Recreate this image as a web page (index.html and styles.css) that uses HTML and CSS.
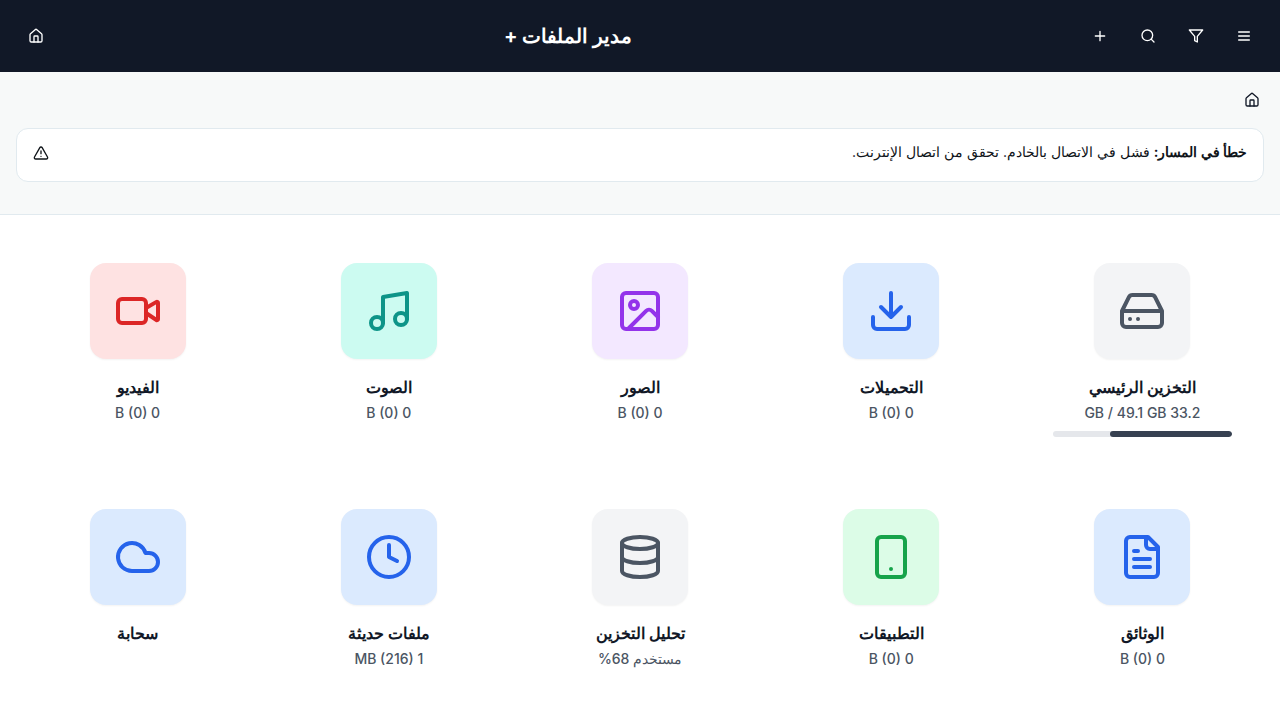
FILE: index.html
```html
<!DOCTYPE html>
<html lang="ar" dir="rtl">
<head>
<meta charset="utf-8">
<title>مدير الملفات +</title>
<meta name="viewport" content="width=device-width, initial-scale=1">
<link rel="stylesheet" href="styles.css">
</head>
<body>
<header class="topbar">
  <div class="actions">
    <button class="icon-btn" aria-label="القائمة"><svg class="icon" viewBox="0 0 24 24"><path d="M4 12h16M4 6h16M4 18h16"/></svg></button>
    <button class="icon-btn" aria-label="تصفية"><svg class="icon" viewBox="0 0 24 24"><path d="M22 3H2l8 9.46V19l4 2v-8.54z"/></svg></button>
    <button class="icon-btn" aria-label="بحث"><svg class="icon" viewBox="0 0 24 24"><circle cx="11" cy="11" r="8"/><path d="m21 21-4.3-4.3"/></svg></button>
    <button class="icon-btn" aria-label="إضافة"><svg class="icon" viewBox="0 0 24 24"><path d="M5 12h14M12 5v14"/></svg></button>
  </div>
  <h1 class="title">مدير الملفات +</h1>
  <button class="icon-btn" aria-label="الرئيسية"><svg class="icon" viewBox="0 0 24 24"><path d="M15 21v-8a1 1 0 0 0-1-1h-4a1 1 0 0 0-1 1v8"/><path d="M3 10a2 2 0 0 1 .709-1.528l7-5.999a2 2 0 0 1 2.582 0l7 5.999A2 2 0 0 1 21 10v9a2 2 0 0 1-2 2H5a2 2 0 0 1-2-2z"/></svg></button>
</header>
<section class="path">
  <nav class="crumbs"><button class="crumb" aria-label="المجلد الرئيسي"><svg class="icon" viewBox="0 0 24 24"><path d="M15 21v-8a1 1 0 0 0-1-1h-4a1 1 0 0 0-1 1v8"/><path d="M3 10a2 2 0 0 1 .709-1.528l7-5.999a2 2 0 0 1 2.582 0l7 5.999A2 2 0 0 1 21 10v9a2 2 0 0 1-2 2H5a2 2 0 0 1-2-2z"/></svg></button></nav>
  <div class="alert" role="alert">
    <p class="alert-text"><strong>خطأ في المسار:</strong> فشل في الاتصال بالخادم. تحقق من اتصال الإنترنت.</p>
    <svg class="icon" viewBox="0 0 24 24"><path d="m21.73 18-8-14a2 2 0 0 0-3.48 0l-8 14A2 2 0 0 0 4 21h16a2 2 0 0 0 1.73-3"/><path d="M12 9v4M12 17h.01"/></svg>
  </div>
</section>
<main class="grid">
  <article class="card">
    <div class="tile gray"><svg class="glyph" viewBox="0 0 24 24"><path d="M22 12H2M5.45 5.11 2 12v6a2 2 0 0 0 2 2h16a2 2 0 0 0 2-2v-6l-3.45-6.89A2 2 0 0 0 16.76 4H7.24a2 2 0 0 0-1.79 1.11zM6 16h.01M10 16h.01"/></svg></div>
    <h2 class="name">التخزين الرئيسي</h2>
    <p class="meta">33.2 GB / 49.1 GB</p>
    <div class="bar"><div class="fill" style="width:68%"></div></div>
  </article>
  <article class="card">
    <div class="tile blue"><svg class="glyph" viewBox="0 0 24 24"><path d="M21 15v4a2 2 0 0 1-2 2H5a2 2 0 0 1-2-2v-4M7 10l5 5 5-5M12 15V3"/></svg></div>
    <h2 class="name">التحميلات</h2>
    <p class="meta">0 B (0)</p>
  </article>
  <article class="card">
    <div class="tile purple"><svg class="glyph" viewBox="0 0 24 24"><rect width="18" height="18" x="3" y="3" rx="2"/><circle cx="9" cy="9" r="2"/><path d="m21 15-3.086-3.086a2 2 0 0 0-2.828 0L6 21"/></svg></div>
    <h2 class="name">الصور</h2>
    <p class="meta">0 B (0)</p>
  </article>
  <article class="card">
    <div class="tile teal"><svg class="glyph" viewBox="0 0 24 24"><path d="M9 18V5l12-2v13"/><circle cx="6" cy="18" r="3"/><circle cx="18" cy="16" r="3"/></svg></div>
    <h2 class="name">الصوت</h2>
    <p class="meta">0 B (0)</p>
  </article>
  <article class="card">
    <div class="tile red"><svg class="glyph" viewBox="0 0 24 24"><path d="m16 13 5.223 3.482a.5.5 0 0 0 .777-.416V7.87a.5.5 0 0 0-.752-.432L16 10.5"/><rect x="2" y="6" width="14" height="12" rx="2"/></svg></div>
    <h2 class="name">الفيديو</h2>
    <p class="meta">0 B (0)</p>
  </article>
  <article class="card">
    <div class="tile blue"><svg class="glyph" viewBox="0 0 24 24"><path d="M15 2H6a2 2 0 0 0-2 2v16a2 2 0 0 0 2 2h12a2 2 0 0 0 2-2V7z"/><path d="M14 2v4a2 2 0 0 0 2 2h4M10 9H8M16 13H8M16 17H8"/></svg></div>
    <h2 class="name">الوثائق</h2>
    <p class="meta">0 B (0)</p>
  </article>
  <article class="card">
    <div class="tile green"><svg class="glyph" viewBox="0 0 24 24"><rect width="14" height="20" x="5" y="2" rx="2"/><path d="M12 18h.01"/></svg></div>
    <h2 class="name">التطبيقات</h2>
    <p class="meta">0 B (0)</p>
  </article>
  <article class="card">
    <div class="tile gray"><svg class="glyph" viewBox="0 0 24 24"><ellipse cx="12" cy="5" rx="9" ry="3"/><path d="M3 5v14a9 3 0 0 0 18 0V5M3 12a9 3 0 0 0 18 0"/></svg></div>
    <h2 class="name">تحليل التخزين</h2>
    <p class="meta">مستخدم 68%</p>
  </article>
  <article class="card">
    <div class="tile blue"><svg class="glyph" viewBox="0 0 24 24"><circle cx="12" cy="12" r="10"/><path d="M12 6v6l4 2"/></svg></div>
    <h2 class="name">ملفات حديثة</h2>
    <p class="meta">1 MB (216)</p>
  </article>
  <article class="card">
    <div class="tile blue"><svg class="glyph" viewBox="0 0 24 24"><path d="M17.5 19H9a7 7 0 1 1 6.71-9h1.79a4.5 4.5 0 1 1 0 9Z"/></svg></div>
    <h2 class="name">سحابة</h2>
  </article>
</main>
</body>
</html>
```

FILE: styles.css
```css
* { box-sizing: border-box; margin: 0; padding: 0; }
body { font-family: Inter, sans-serif; background: #fff; color: #111827; line-height: 24px; }
button { border: 0; background: none; color: inherit; font: inherit; cursor: pointer; }
svg { fill: none; stroke: currentColor; stroke-width: 2; stroke-linecap: round; stroke-linejoin: round; flex-shrink: 0; }
.icon { width: 16px; height: 16px; display: block; }
.topbar { display: flex; align-items: center; justify-content: space-between; padding: 16px; background: #111827; color: #fff; }
.actions { display: flex; gap: 8px; }
.icon-btn { width: 40px; height: 40px; display: grid; place-items: center; }
.title { font-size: 20px; line-height: 28px; font-weight: 700; }
.path { background: #f7f9f9; border-bottom: 1px solid #e1eaef; padding: 16px 16px 32px; }
.crumbs { display: flex; margin-bottom: 16px; }
.crumb { height: 24px; width: 24px; display: grid; place-items: center; }
.alert { display: flex; justify-content: space-between; min-height: 54px; padding: 16px; border: 1px solid #e1eaef; border-radius: 12px; background: #fff; color: #0f1419; }
.alert-text { font-size: 14px; line-height: 14px; }
.grid { display: grid; grid-template-columns: repeat(5, 1fr); gap: 24px; padding: 24px; }
.card { display: flex; flex-direction: column; align-items: center; padding: 24px; }
.tile { width: 96px; height: 96px; display: grid; place-items: center; border-radius: 16px; margin-bottom: 16px; box-shadow: 0 1px 2px rgba(0,0,0,.05); }
.glyph { width: 48px; height: 48px; }
.name { font-size: 16px; line-height: 24px; font-weight: 600; margin-bottom: 4px; }
.meta { font-size: 14px; line-height: 20px; font-weight: 500; color: #4b5563; }
.bar { width: 100%; height: 6px; margin-top: 8px; border-radius: 3px; background: #e5e7eb; overflow: hidden; }
.fill { height: 100%; border-radius: 3px; background: #374151; }
.gray { background: #f3f4f6; color: #4b5563; }
.blue { background: #dbeafe; color: #2563eb; }
.purple { background: #f3e8ff; color: #9333ea; }
.teal { background: #ccfbf1; color: #0d9488; }
.red { background: #fee2e2; color: #dc2626; }
.green { background: #dcfce7; color: #16a34a; }
```
